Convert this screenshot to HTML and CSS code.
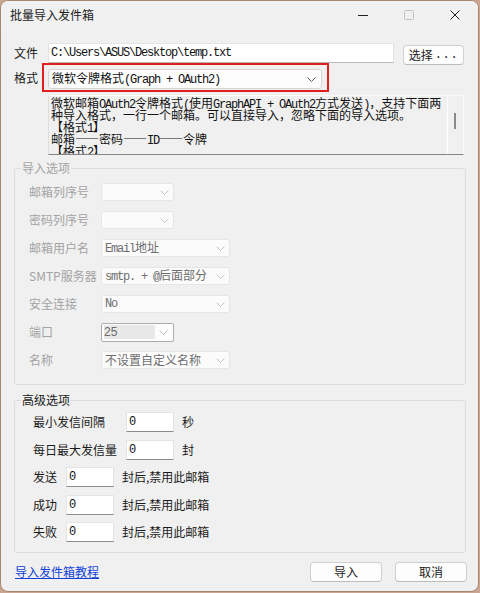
FILE: index.html
```html
<!DOCTYPE html>
<html lang="zh-CN">
<head>
<meta charset="utf-8">
<title>批量导入发件箱</title>
<link rel="stylesheet" href="styles.css">
</head>
<body>
<div class="window">
  <div class="titlebar">
    <span class="title">批量导入发件箱</span>
    <div class="caption">
      <span class="cap-btn"><svg width="10" height="10" viewBox="0 0 10 10"><path d="M0 5.5H10" stroke="#1f1f1f" stroke-width="1"/></svg></span>
      <span class="cap-btn"><svg width="10" height="10" viewBox="0 0 10 10"><rect x="0.5" y="0.5" width="9" height="9" rx="1" fill="none" stroke="#c2c2c2"/></svg></span>
      <span class="cap-btn"><svg width="10" height="10" viewBox="0 0 10 10"><path d="M0.5 0.5L9.5 9.5M9.5 0.5L0.5 9.5" stroke="#1f1f1f" stroke-width="1"/></svg></span>
    </div>
  </div>

  <div class="content">
    <div class="file-row">
      <span class="lbl lbl-file">文件</span>
      <div class="edit file-edit m">C:\Users\ASUS\Desktop\temp.txt</div>
      <button class="btn choose">选择<span class="m">...</span></button>
    </div>

    <div class="fmt-row">
      <span class="lbl lbl-fmt">格式</span>
      <div class="redbox">
        <div class="combo main-combo">
          <span class="val m"><span class="c">微软令牌格式</span>(Graph + OAuth2)</span>
          <svg class="chev" width="9" height="5" viewBox="0 0 9 5"><path d="M0.5 0.5L4.5 4.5L8.5 0.5" fill="none" stroke="currentColor"/></svg>
        </div>
      </div>
    </div>

    <div class="memo">
      <div class="memo-text m">
        <div><span class="c">微软邮箱</span>OAuth2<span class="c">令牌格式</span>(<span class="c">使用</span>GraphAPI + OAuth2<span class="c">方式发送</span>)<span class="c">，支持下面两</span></div>
        <div><span class="c">种导入格式，一行一个邮箱。可以直接导入，忽略下面的导入选项。</span></div>
        <div><span class="c">【格式</span>1<span class="c">】</span></div>
        <div><span class="c">邮箱——密码——</span>ID<span class="c">——令牌</span></div>
        <div><span class="c">【格式</span>2<span class="c">】</span></div>
      </div>
      <div class="memo-scroll"><span class="thumb"></span></div>
    </div>

    <fieldset class="group group-import">
      <legend>导入选项</legend>
      <div class="opts">
        <div class="opt-row"><span class="opt-lbl">邮箱列序号</span>
          <div class="combo dis sm"><span class="val"></span><svg class="chev" width="9" height="5" viewBox="0 0 9 5"><path d="M0.5 0.5L4.5 4.5L8.5 0.5" fill="none" stroke="currentColor"/></svg></div></div>
        <div class="opt-row"><span class="opt-lbl">密码列序号</span>
          <div class="combo dis sm"><span class="val"></span><svg class="chev" width="9" height="5" viewBox="0 0 9 5"><path d="M0.5 0.5L4.5 4.5L8.5 0.5" fill="none" stroke="currentColor"/></svg></div></div>
        <div class="opt-row"><span class="opt-lbl">邮箱用户名</span>
          <div class="combo dis wide"><span class="val m">Email<span class="c">地址</span></span><svg class="chev" width="9" height="5" viewBox="0 0 9 5"><path d="M0.5 0.5L4.5 4.5L8.5 0.5" fill="none" stroke="currentColor"/></svg></div></div>
        <div class="opt-row"><span class="opt-lbl">SMTP服务器</span>
          <div class="combo dis wide"><span class="val m">smtp. + @<span class="c">后面部分</span></span><svg class="chev" width="9" height="5" viewBox="0 0 9 5"><path d="M0.5 0.5L4.5 4.5L8.5 0.5" fill="none" stroke="currentColor"/></svg></div></div>
        <div class="opt-row"><span class="opt-lbl">安全连接</span>
          <div class="combo dis wide"><span class="val m">No</span><svg class="chev" width="9" height="5" viewBox="0 0 9 5"><path d="M0.5 0.5L4.5 4.5L8.5 0.5" fill="none" stroke="currentColor"/></svg></div></div>
        <div class="opt-row"><span class="opt-lbl">端口</span>
          <div class="combo port"><span class="port-edit">25</span><svg class="chev" width="9" height="5" viewBox="0 0 9 5"><path d="M0.5 0.5L4.5 4.5L8.5 0.5" fill="none" stroke="currentColor"/></svg></div></div>
        <div class="opt-row"><span class="opt-lbl">名称</span>
          <div class="combo dis wide"><span class="val">不设置自定义名称</span><svg class="chev" width="9" height="5" viewBox="0 0 9 5"><path d="M0.5 0.5L4.5 4.5L8.5 0.5" fill="none" stroke="currentColor"/></svg></div></div>
      </div>
    </fieldset>

    <fieldset class="group group-adv">
      <legend>高级选项</legend>
      <div class="adv">
        <div class="adv-row"><span class="adv-lbl long">最小发信间隔</span><div class="edit num m">0</div><span class="unit">秒</span></div>
        <div class="adv-row"><span class="adv-lbl long">每日最大发信量</span><div class="edit num m">0</div><span class="unit">封</span></div>
        <div class="adv-row"><span class="adv-lbl short">发送</span><div class="edit num m">0</div><span class="unit">封后,禁用此邮箱</span></div>
        <div class="adv-row"><span class="adv-lbl short">成功</span><div class="edit num m">0</div><span class="unit">封后,禁用此邮箱</span></div>
        <div class="adv-row"><span class="adv-lbl short">失败</span><div class="edit num m">0</div><span class="unit">封后,禁用此邮箱</span></div>
      </div>
    </fieldset>

    <div class="bottom">
      <a class="link" href="#">导入发件箱教程</a>
      <button class="btn action">导入</button>
      <button class="btn action">取消</button>
    </div>
  </div>
</div>
</body>
</html>
```
FILE: styles.css
```css
* { box-sizing: border-box; }
html, body { margin: 0; padding: 0; }
body {
  width: 480px;
  height: 593px;
  overflow: hidden;
  background: #c9a690;
  font-family: "Noto Sans CJK SC", sans-serif;
  font-size: 12px;
  color: #1a1a1a;
}
.window {
  width: 479px;
  height: 592px;
  background: #f0f0f0;
  border: 1px solid #a88670;
  border-radius: 8px;
  overflow: hidden;
  display: flex;
  flex-direction: column;
}
.titlebar {
  height: 28px;
  flex: none;
  display: flex;
  align-items: center;
  background: #f1f1f1;
}
.title { flex: 1; padding-left: 9px; line-height: 16px; color: #1b1b1b; }
.caption { display: flex; height: 28px; }
.cap-btn { width: 46px; height: 28px; display: flex; align-items: center; justify-content: center; }
.cap-btn svg { display: block; }

.content { padding: 14px 11px 0 13px; display: flex; flex-direction: column; }

.m { font-family: "Liberation Mono", monospace; font-size: 12px; letter-spacing: -1.2px; }
.c { font-family: "Noto Sans CJK SC", sans-serif; font-size: 12px; letter-spacing: 0; }

.lbl { line-height: 16px; color: #1a1a1a; flex: none; }
.lbl-file { width: 34px; }
.lbl-fmt { width: 28px; }

.file-row { display: flex; align-items: flex-start; height: 20px; }
.edit {
  background: #fff;
  border: 1px solid #e4e4e4;
  border-bottom-color: #b9b9b9;
  display: flex;
  align-items: center;
  padding-left: 2px;
  line-height: 14px;
  white-space: nowrap;
  color: #111;
}
.file-edit { width: 346px; height: 20px; }
.lbl-file { margin-top: 2px; }

.btn {
  font-family: "Noto Sans CJK SC", sans-serif;
  font-size: 12px;
  color: #1a1a1a;
  background: #fdfdfd;
  border: 1px solid #d0d0d0;
  border-bottom-color: #bcbcbc;
  border-radius: 4px;
  height: 20px;
  padding: 0;
  line-height: 16px;
  display: flex;
  align-items: center;
  justify-content: center;
}
.choose { width: 61px; margin-left: 9px; margin-top: 2px; }
.choose .m { letter-spacing: 0.6px; margin-left: 2px; }

.fmt-row { display: flex; align-items: center; height: 29px; }
.redbox {
  width: 287px;
  height: 29px;
  border: 2px solid #e21e1e;
  padding: 4px 5px 1px 4px;
}
.combo {
  display: flex;
  align-items: center;
  justify-content: space-between;
  border-radius: 3px;
  white-space: nowrap;
}
.chev { display: block; flex: none; }
.main-combo {
  width: 274px;
  height: 20px;
  background: #fdfdfd;
  border: 1px solid #d5d5d5;
  padding: 0 5px 0 3px;
  color: #111;
  line-height: 14px;
}
.main-combo .chev { color: #5c5c5c; }

.memo {
  margin-top: 3px;
  margin-left: 34px;
  width: 416px;
  height: 60px;
  display: flex;
  background: #f0f0f0;
  border: 1px solid #fafafa;
  border-left-color: #dedede;
  border-bottom-color: #858585;
}
.memo-text {
  flex: 1;
  padding: 1px 0 0 2px;
  line-height: 12px;
  overflow: hidden;
  white-space: nowrap;
  color: #111;
}
.memo-text div { height: 12px; line-height: 12px; }
.memo-text .c { line-height: 12px; }
.memo-scroll {
  width: 16px;
  flex: none;
  border-left: 1px solid #ffffff;
  padding: 17px 0 0 6px;
}
.thumb { display: block; width: 2px; height: 16px; background: #8a8a8a; }

.group {
  margin: 0;
  padding: 0;
  min-width: 0;
  width: 452px;
  border: 1px solid #dcdcdc;
  border-radius: 3px;
}
.group legend {
  margin-left: 6px;
  padding: 0 1px;
  line-height: 16px;
  font-size: 12px;
}
.group-import { margin-top: 5px; }
.group-import legend { color: #a3a3a3; }
.opts { padding: 2px 0 10px 14px; display: flex; flex-direction: column; }
.opt-row { height: 28px; display: flex; align-items: center; }
.opt-lbl { width: 72px; flex: none; color: #a3a3a3; line-height: 16px; }
.combo.dis {
  height: 18px;
  background: #fbfbfb;
  border: 1px solid #e6e6e6;
  padding: 0 4px 0 3px;
  color: #6e6e6e;
  line-height: 14px;
}
.combo.dis .chev { color: #c4c4c4; }
.combo.sm { width: 73px; }
.combo.wide { width: 129px; }
.combo.port {
  width: 73px;
  height: 19px;
  background: #fdfdfd;
  border: 1px solid #adadad;
  border-radius: 2px;
  padding: 0 5px 0 2px;
}
.combo.port .chev { color: #bdbdbd; }
.port-edit {
  width: 51px;
  height: 14px;
  background: #e8e8e8;
  font-family: "Liberation Sans", sans-serif;
  font-size: 12px;
  line-height: 14px;
  color: #6a6a6a;
}

.group-adv { margin-top: 7px; }
.group-adv legend { color: #1a1a1a; }
.adv { padding: 4px 0 10px 18px; display: flex; flex-direction: column; gap: 7.5px; }
.adv-row { height: 20px; display: flex; align-items: center; }
.adv-lbl { flex: none; line-height: 16px; }
.adv-lbl.long { width: 93px; }
.adv-lbl.short { width: 33px; }
.edit.num { width: 48px; height: 20px; border-bottom-color: #8c8c8c; }
.unit { margin-left: 8px; line-height: 16px; }

.bottom { margin-top: 9px; height: 20px; display: flex; align-items: center; }
.link {
  flex: 1;
  padding-left: 1px;
  color: #1040d8;
  text-decoration: underline;
  line-height: 16px;
}
.action { width: 72px; }
.action + .action { margin-left: 13px; }
```
